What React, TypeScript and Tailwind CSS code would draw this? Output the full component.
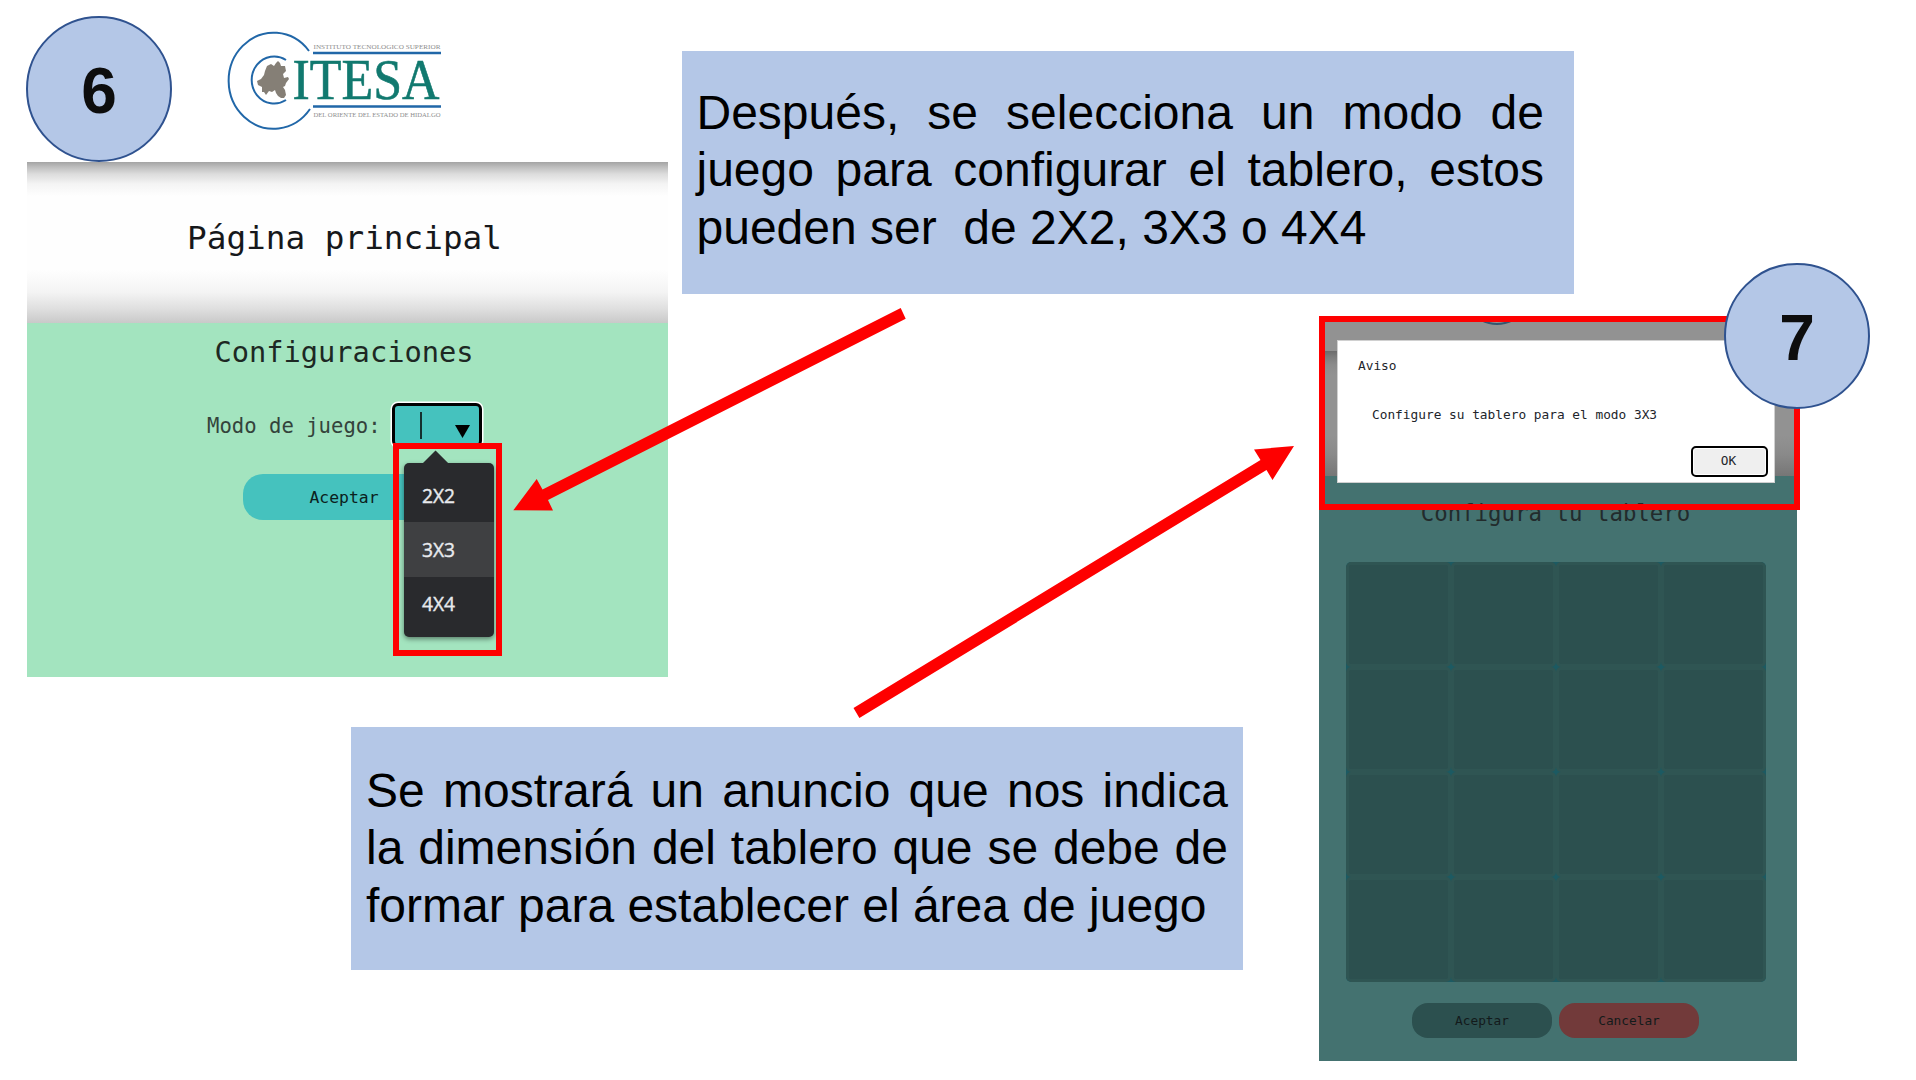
const mono = "font-['DejaVu_Sans_Mono',monospace] whitespace-pre";

function Logo() {
  return (
    <svg viewBox="0 0 260 120" className="block h-[120px] w-[260px] overflow-visible">
      <path d="M94 31A45 48 0 1 0 95 89" fill="none" stroke="#2167a8" strokeWidth="2" />
      <path d="M71 40A22.500 23.500 0 1 0 71 80" fill="none" stroke="#2167a8" strokeWidth="2" />
      <path
        d="M52 46L56 44L59 46L61 43L63 41L65 43L66 46L70 46L71 51L68 54L69 58L73 57L74 59L71 63L70 66L68 67L70 70L71 75L69 78L66 78L63 76L61 73L60 70L57 72L54 71L51 75L49 72L47 72L47 67L43 65L42 61L46 59L49 55L50 51Z"
        fill="#857f76"
      />
      <path d="M98 33H226M98 86.500H226" stroke="#2167a8" strokeWidth="2.600" />
      <g fontFamily="Liberation Serif, serif">
        <text x="77.500" y="79" fontSize="57" fill="#11796f" stroke="#11796f" strokeWidth="0.600" textLength="147" lengthAdjust="spacingAndGlyphs">ITESA</text>
        <text x="98.500" y="28.700" fontSize="7" fill="#8d8d8d" textLength="127" lengthAdjust="spacingAndGlyphs">INSTITUTO TECNOLOGICO SUPERIOR</text>
        <text x="98.500" y="96.700" fontSize="7" fill="#8d8d8d" textLength="127" lengthAdjust="spacingAndGlyphs">DEL ORIENTE DEL ESTADO DE HIDALGO</text>
      </g>
    </svg>
  );
}

function StepBadge({ n, place }: { n: string; place: string }) {
  return (
    <div
      className={`absolute flex size-[146px] items-center justify-center rounded-full border-2 border-[#2f528f] bg-[#b4c7e7] pt-[4px] font-['Liberation_Sans',sans-serif] text-[64px] leading-none font-bold text-[#0d0d0d] ${place}`}
    >
      <span>{n}</span>
    </div>
  );
}

function Note({ lines, place }: { lines: string[]; place: string }) {
  return (
    <div
      className={`absolute flex h-[243px] w-[892px] flex-col justify-center bg-[#b4c7e7] font-['Liberation_Sans',sans-serif] text-[48px] leading-[57.5px] whitespace-pre-wrap text-black ${place}`}
    >
      {lines.map((line, i) => (
        <p key={line} className={i < lines.length - 1 ? "[text-align-last:justify]" : "whitespace-pre"}>
          {line}
        </p>
      ))}
    </div>
  );
}

function ModePanel() {
  return (
    <section className="absolute top-0 left-[27px] flex h-[677px] w-[641px] flex-col">
      <header className="h-[162px] pt-5 pl-[188px]">
        <Logo />
      </header>
      <div className="flex h-[161px] items-center justify-center bg-[linear-gradient(to_bottom,#a4a4a4_0px,#bebebe_5px,#dcdcdc_12px,#f4f4f4_22px,#fefefe_34px,#fefefe_108px,#f4f4f4_130px,#e0e0e0_146px,#c9c9c9_161px)]">
        <h1 className={`${mono} pr-[6px] pb-[9px] text-[32.7px] leading-none text-[#16181b]`}>Página principal</h1>
      </div>
      <div className="flex flex-1 flex-col items-center bg-[#a3e4bf]">
        <h2 className={`${mono} mt-[11px] pr-[7px] text-[28.7px] leading-[36px] text-[#1d2823]`}>Configuraciones</h2>
        <div className="mt-[32px] flex h-[46px] w-full items-center pl-[180px]">
          <span className={`${mono} w-[185px] pt-[2px] text-[20.6px] leading-none text-[#33433b]`}>Modo de juego:</span>
          <div className="flex h-[44px] w-[90px] items-start rounded-[6px] border-[3px] border-black bg-[#45c2be] ring-[1.5px] ring-white">
            <span className="mt-[6px] ml-[25px] h-[27px] w-[2px] bg-[#14302f]" />
            <svg viewBox="0 0 15 13" className="mt-[19px] ml-[33px] h-[13px] w-[15px]">
              <path d="M0 0H15L7.500 13Z" />
            </svg>
          </div>
        </div>
        <div className="mt-[26px] flex h-[46px] w-full pl-[216px]">
          <button className={`${mono} h-[46px] w-[202px] rounded-[20px] bg-[#45c2be] pt-[2px] text-[16.4px] text-[#0b2120]`}>Aceptar</button>
        </div>
      </div>
    </section>
  );
}

function ModeMenu() {
  return (
    <div className="absolute top-[443px] left-[393px] h-[213px] w-[109px] border-[6px] border-[#fe0000] pl-[5px]">
      <svg viewBox="0 0 90 14" className="mt-px block h-[13px] w-[90px]">
        <path d="M17 14L30.500 0.500L44 14Z" fill="#292a2d" />
      </svg>
      <ul className="flex h-[174px] w-[90px] flex-col rounded-[5px] bg-[#292a2d] py-[5px] font-['Open_Sans',sans-serif] text-[19.2px] leading-[56px] text-[#e8eaed] shadow-[0_2px_5px_rgba(0,0,0,0.45)] [-webkit-text-stroke:0.4px_#e8eaed]">
        <li className="h-[54px] pl-[18px]">2X2</li>
        <li className="h-[55px] bg-[#3f4042] pl-[18px]">3X3</li>
        <li className="h-[54px] pl-[18px] leading-[54px]">4X4</li>
      </ul>
    </div>
  );
}

function BoardPanel() {
  return (
    <section className="absolute top-[318px] left-[1319px] flex h-[743px] w-[478px] flex-col">
      <div className="flex h-[33px] justify-center overflow-hidden bg-[#929292]">
        <svg viewBox="0 0 80 8" className="mr-[123px] h-[8px] w-[80px]">
          <path d="M24 2Q40 10 56 2" fill="none" stroke="#34566f" strokeWidth="2" />
        </svg>
      </div>
      <div className="h-[125px] bg-[linear-gradient(to_bottom,#6c6c6c_0px,#7d7d7d_6px,#8c8c8c_14px,#929292_24px,#929292_85px,#8a8a8a_103px,#767676_125px)]" />
      <div className="flex flex-1 flex-col items-center bg-[#447270]">
        <h2 className={`${mono} mt-[21px] pr-[5px] text-[22.4px] leading-[32px] text-[#222b2c]`}>Configura tu tablero</h2>
        <div className="mt-[33px] mr-[4px] grid size-[420px] grid-cols-4 overflow-hidden rounded-[5px] bg-[#1c5a62]">
          {Array.from({ length: 16 }, (_, i) => (
            <div key={i} className="rounded-[5px] border-[3px] border-[#2f5553] bg-[#2c504f]" />
          ))}
        </div>
        <div className={`mt-[21px] mr-[5px] flex gap-[7px] ${mono} text-[12.8px] text-[#131a1b]`}>
          <button className="h-[35px] w-[140px] rounded-[16px] bg-[#2c504f]">Aceptar</button>
          <button className="h-[35px] w-[140px] rounded-[16px] bg-[#723a3a]">Cancelar</button>
        </div>
      </div>
    </section>
  );
}

function Notice() {
  return (
    <div className="absolute top-[316px] left-[1319px] h-[194px] w-[481px] border-[6px] border-[#fe0000]">
      <div className={`mt-[18px] ml-[12px] flex h-[143px] w-[438px] flex-col border border-[#d0d0d0] bg-white pr-[6px] text-[12.8px] leading-[20px] text-[#22252b] ${mono}`}>
        <p className="mt-[15px] ml-[20px]">Aviso</p>
        <p className="mt-[29px] ml-[34px]">Configure su tablero para el modo 3X3</p>
        <button className="mt-[21px] h-[31px] w-[77px] self-end rounded-[5px] border-[2.5px] border-black bg-[#efefef] pr-[2px] leading-none shadow-[inset_0_0_0_1px_#fff]">OK</button>
      </div>
    </div>
  );
}

export default function App() {
  return (
    <main className="relative h-[1080px] w-[1916px] overflow-hidden bg-white">
      <ModePanel />
      <BoardPanel />
      <ModeMenu />
      <Notice />
      <Note
        place="top-[51px] left-[682px] pr-[30px] pb-[5px] pl-[14.5px]"
        lines={["Después, se selecciona un modo de", "juego para configurar el tablero, estos", "pueden ser  de 2X2, 3X3 o 4X4"]}
      />
      <Note
        place="top-[727px] left-[351px] pr-[15px] pb-[1px] pl-[15px]"
        lines={["Se mostrará un anuncio que nos indica", "la dimensión del tablero que se debe de", "formar para establecer el área de juego"]}
      />
      <svg viewBox="0 0 1916 1080" className="pointer-events-none absolute inset-0" fill="#fe0000">
        <path d="M900.700 308L905.700 318.700L548 500L553 510.500L513.300 510.300L536.700 479L542.500 489.500Z" />
        <path d="M853.500 708L859.400 718L1266.500 470L1272.500 480L1294 446L1254 449.500L1260.500 460Z" />
      </svg>
      <StepBadge n="6" place="top-[16px] left-[26px]" />
      <StepBadge n="7" place="top-[263px] left-[1724px]" />
    </main>
  );
}
